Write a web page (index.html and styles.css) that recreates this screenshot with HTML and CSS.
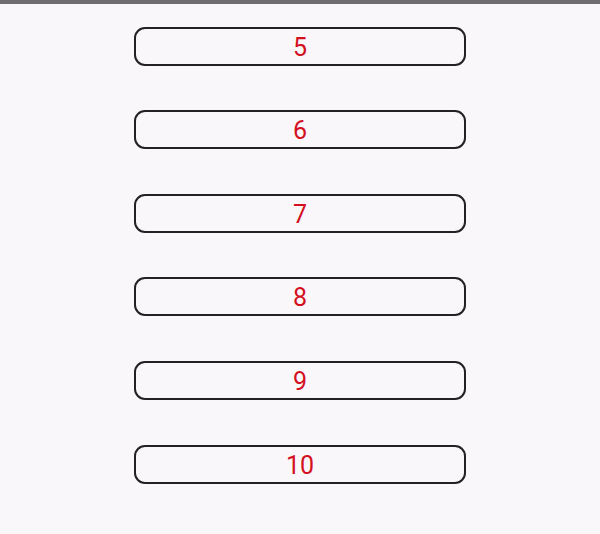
FILE: index.html
```html
<!DOCTYPE html>
<html>
<head>
<meta charset="utf-8">
<link rel="stylesheet" href="styles.css">
</head>
<body>
<div class="topbar"></div>
<div class="list">
  <div class="item">5</div>
  <div class="item">6</div>
  <div class="item">7</div>
  <div class="item">8</div>
  <div class="item">9</div>
  <div class="item">10</div>
</div>
</body>
</html>
```
FILE: styles.css
```css
html, body {
  margin: 0;
  padding: 0;
  background: #f9f7f9;
  width: 600px;
  height: 534px;
  overflow: hidden;
}
.topbar {
  height: 4px;
  background: #6f6e6f;
}
.list {
  display: flex;
  flex-direction: column;
  align-items: center;
  gap: 44.6px;
  padding-top: 22.6px;
}
.item {
  box-sizing: border-box;
  width: 332px;
  height: 39px;
  border: 2px solid #222;
  border-radius: 11px;
  display: flex;
  align-items: center;
  justify-content: center;
  padding-top: 2px;
  font-family: Roboto, "Noto Sans", sans-serif;
  font-size: 25px;
  color: #d4101f;
}
```
